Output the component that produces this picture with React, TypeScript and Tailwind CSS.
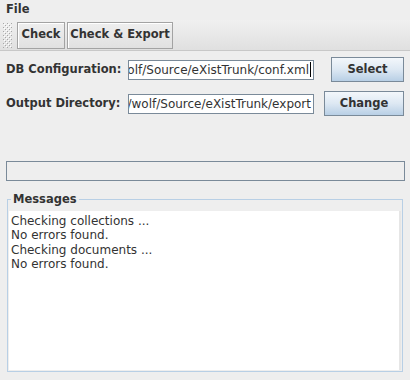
import { FC } from "react";

const font = { fontFamily: '"DejaVu Sans", "Liberation Sans", sans-serif' };

const Grip: FC = () => (
  <svg width="9" height="25" className="ml-[3px] shrink-0">
    <defs>
      <pattern id="bumps" width="4" height="4" patternUnits="userSpaceOnUse">
        <rect x="0" y="0" width="1" height="1" fill="#a8a8a8" />
        <rect x="1" y="1" width="1" height="1" fill="#ffffff" />
        <rect x="2" y="2" width="1" height="1" fill="#a8a8a8" />
        <rect x="3" y="3" width="1" height="1" fill="#ffffff" />
      </pattern>
    </defs>
    <rect width="9" height="25" fill="url(#bumps)" />
  </svg>
);

const ToolButton: FC<{ label: string; width: string }> = ({ label, width }) => (
  <div
    className={`${width} shrink-0 h-[27px] border border-[#a3a3a3] shadow-[inset_1px_1px_0_#ffffff] flex items-center justify-center font-bold text-[11.5px] text-[#333333] whitespace-nowrap`}
  >
    {label}
  </div>
);

const PathField: FC<{ value: string; caret?: boolean }> = ({ value, caret }) => (
  <div className="w-[186px] shrink-0 h-[20px] border border-[#7a8a99] bg-white flex justify-end items-center overflow-hidden whitespace-nowrap text-[12px] text-[#333333] pr-[2px]">
    <span className="shrink-0">{value}</span>
    {caret && <span className="w-[1px] h-[15px] bg-black ml-[1px] shrink-0" />}
  </div>
);

const OceanButton: FC<{ label: string; width: string }> = ({ label, width }) => (
  <div
    className={`${width} shrink-0 h-[25px] border border-[#7a8a99] bg-linear-to-b from-[#f3f7fb] via-[#dde8f3] to-[#b8cfe5] flex items-center justify-center font-bold text-[11.5px] text-[#333333]`}
  >
    {label}
  </div>
);

const messages = [
  "Checking collections ...",
  "No errors found.",
  "Checking documents ...",
  "No errors found.",
];

export default function App() {
  return (
    <div
      className="w-[410px] h-[380px] bg-[#eeeeee] text-[#333333] text-[12px] flex flex-col overflow-hidden"
      style={font}
    >
      {/* Menu bar */}
      <div className="h-[20px] flex items-center px-[6px] font-bold text-[11.5px]">File</div>

      {/* Toolbar */}
      <div className="h-[31px] bg-linear-to-b from-[#f0f0f0] to-[#e0e0e0] border-b border-[#c8c8c8] flex items-center">
        <Grip />
        <div className="flex gap-[2px] ml-[5px]">
          <ToolButton label="Check" width="w-[48px]" />
          <ToolButton label="Check & Export" width="w-[106px]" />
        </div>
      </div>

      {/* Form rows */}
      <div className="flex flex-col pt-[6px] gap-[9px]">
        <div className="flex items-center h-[25px]">
          <span className="w-[128px] shrink-0 pl-[6px] font-bold text-[11.5px] whitespace-nowrap">
            DB Configuration:
          </span>
          <PathField value="/Users/wolf/Source/eXistTrunk/conf.xml" caret />
          <div className="ml-[17px] shrink-0">
            <OceanButton label="Select" width="w-[73px]" />
          </div>
        </div>
        <div className="flex items-center h-[25px]">
          <span className="w-[128px] shrink-0 pl-[6px] font-bold text-[11.5px] whitespace-nowrap">
            Output Directory:
          </span>
          <PathField value="/Users/wolf/Source/eXistTrunk/export" />
          <div className="ml-[10px] shrink-0">
            <OceanButton label="Change" width="w-[80px]" />
          </div>
        </div>
      </div>

      {/* Progress bar */}
      <div className="ml-[6px] mt-[45px] w-[399px] h-[20px] border border-[#7a8a99] bg-[#eeeeee]" />

      {/* Messages */}
      <fieldset className="ml-[7px] mt-[11px] w-[396px] border border-[#b8cfe5] px-[1px] pb-[1px]">
        <legend className="ml-[2px] px-[2px] font-bold text-[11.5px] leading-[14px]">Messages</legend>
        <div className="mt-[5px] h-[159px] bg-white border-r-2 border-[#e6e6e6] pl-[2px] pt-[3px]">
          {messages.map((m, i) => (
            <div key={i} className="leading-[14.4px] whitespace-nowrap">
              {m}
            </div>
          ))}
        </div>
      </fieldset>
    </div>
  );
}
